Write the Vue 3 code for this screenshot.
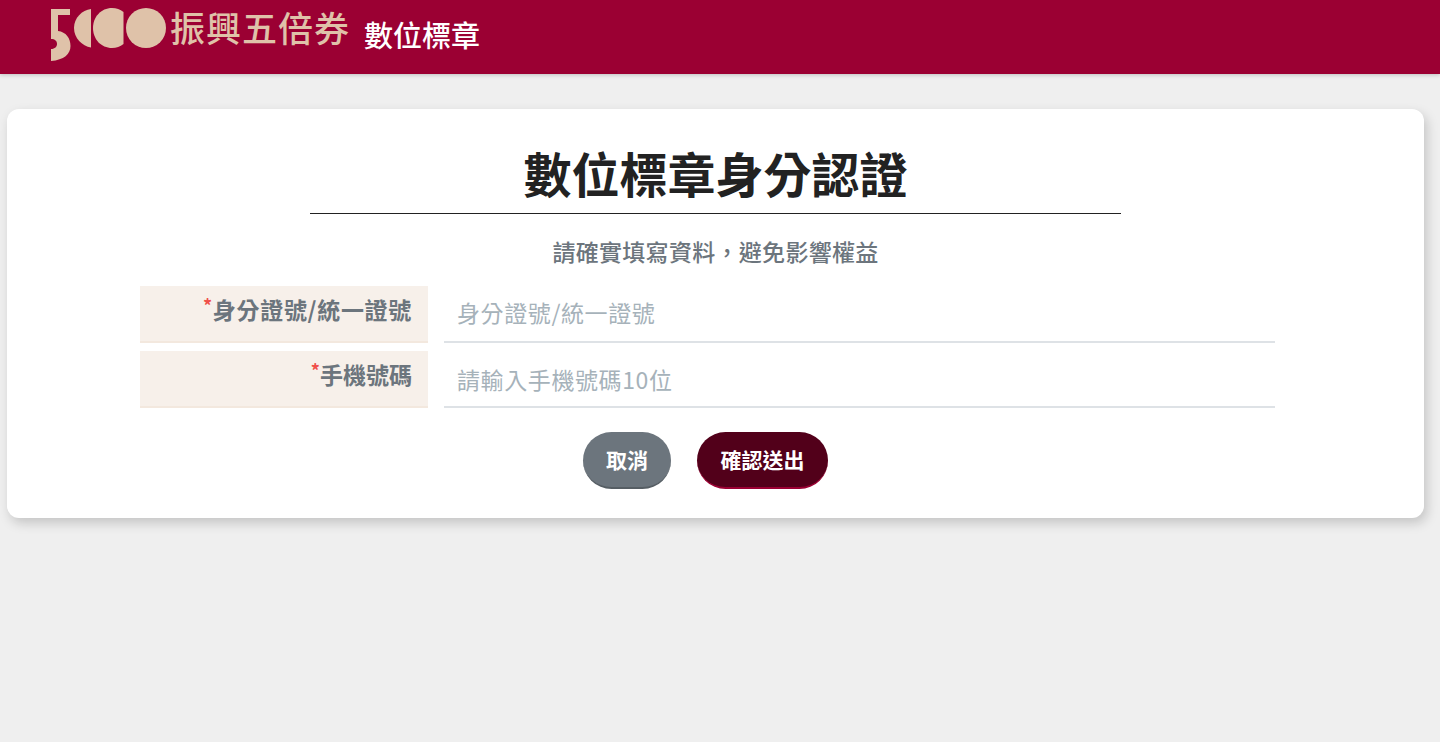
<template>
  <div class="page">
    <header class="top-bar">
      <div class="logo">
        <svg class="logo-mark" width="116" height="54" viewBox="0 0 116 54">
          <path d="M1 1H20V7H8V23C16 24 20.5 30 20.5 38C20.5 46 14 52 1 53V41C5 41 7 38.5 7 36C7 33 5 31 1 31Z" />
          <path d="M41 1V39.5C32 38 24 30 24 20C24 10 32 2 41 1Z" />
          <path d="M73.5 4V36C70 38.5 66.5 40 62 40C51 40 43 31 43 20C43 9 51 0 62 0C66.5 0 70 1.5 73.5 4Z" />
          <circle cx="96" cy="20" r="20" />
        </svg>
        <span class="logo-text">振興五倍券</span>
      </div>
      <span class="top-title">數位標章</span>
    </header>

    <main class="card">
      <h1 class="card-title">數位標章身分認證</h1>
      <p class="card-hint">請確實填寫資料，避免影響權益</p>

      <form class="form" @submit.prevent>
        <div v-for="field in fields" :key="field.label" class="form-row">
          <label class="form-label"><span class="required">*</span>{{ field.label }}</label>
          <div class="form-input">
            <input type="text" :placeholder="field.placeholder" />
          </div>
        </div>

        <div class="actions">
          <button type="button" class="btn btn-cancel">取消</button>
          <button type="submit" class="btn btn-submit">確認送出</button>
        </div>
      </form>
    </main>
  </div>
</template>

<script setup>
const fields = [
  { label: '身分證號/統一證號', placeholder: '身分證號/統一證號' },
  { label: '手機號碼', placeholder: '請輸入手機號碼10位' }
]
</script>

<style>
body {
  background: #efefef;
}
</style>

<style scoped>
.page {
  min-height: 742px;
  background: #efefef;
  font-family: "Noto Sans CJK TC", "Noto Sans", sans-serif;
  overflow: hidden;
}

.top-bar {
  height: 74px;
  background: #9b0033;
  display: flex;
  align-items: flex-start;
  padding-left: 50px;
  box-shadow: 0 1px 4px rgba(0, 0, 0, 0.2);
  box-sizing: border-box;
}

.logo {
  display: flex;
  align-items: flex-start;
  gap: 4px;
  padding-top: 8px;
}

.logo-mark {
  display: block;
  fill: #dfc2a9;
}

.logo-text {
  font-size: 35px;
  line-height: 42px;
  font-weight: 500;
  color: #dfc2a9;
  letter-spacing: 1px;
  margin-top: -2px;
}

.top-title {
  margin-left: 14px;
  margin-top: 14px;
  font-size: 29px;
  line-height: 40px;
  font-weight: 500;
  color: #fff;
}

.card {
  margin: 35px 16px 0 7px;
  height: 409px;
  box-sizing: border-box;
  background: #fff;
  border-radius: 12px;
  box-shadow: 3px 5px 12px rgba(0, 0, 0, 0.18);
  padding-top: 32px;
  display: flex;
  flex-direction: column;
  align-items: center;
}

.card-title {
  margin: 0;
  width: 811px;
  height: 73px;
  border-bottom: 1px solid #222;
  text-align: center;
  font-size: 48px;
  line-height: 62px;
  font-weight: 700;
  color: #222;
  box-sizing: border-box;
}

.card-hint {
  margin: 21px 0 0;
  font-size: 23px;
  line-height: 33px;
  font-weight: 500;
  letter-spacing: 0.3px;
  color: #6c757d;
}

.form {
  width: 1135px;
  margin: 18px 16px 0 0;
}

.form-row {
  display: flex;
  gap: 16px;
  height: 57px;
  margin-bottom: 8px;
}

.form-label {
  width: 288px;
  box-sizing: border-box;
  background: #f7f0ea;
  border-bottom: 2px solid #f3e8de;
  padding: 4px 16px 0 0;
  text-align: right;
  font-size: 23px;
  line-height: 38px;
  font-weight: 700;
  letter-spacing: 0.7px;
  color: #6c757d;
}

.form-row + .form-row .form-label {
  letter-spacing: 0;
}

.required {
  color: #f0504a;
  font-size: 18px;
  vertical-align: 6px;
  line-height: 1;
}

.form-input {
  flex: 1;
}

.form-input input {
  width: 100%;
  height: 57px;
  box-sizing: border-box;
  border: 0;
  border-bottom: 2px solid #dee2e6;
  padding: 0 13px 3px;
  font-family: inherit;
  font-size: 23px;
  letter-spacing: 0.6px;
  color: #495057;
  outline: none;
  background: transparent;
}

.form-row + .form-row input {
  padding-bottom: 0;
}

.form-input input::placeholder {
  color: #a6b2ba;
  opacity: 1;
}

.actions {
  display: flex;
  justify-content: center;
  gap: 26px;
  margin-top: 24px;
  padding-right: 4px;
}

.btn {
  height: 57px;
  border: 0;
  border-radius: 29px;
  font-family: inherit;
  font-size: 21px;
  font-weight: 700;
  color: #fff;
  padding: 0 0 2px;
  cursor: pointer;
}

.btn-cancel {
  width: 88px;
  background: #6c757d;
  border-bottom: 2px solid #565e64;
}

.btn-submit {
  width: 131px;
  background: #52001a;
  border-bottom: 2px solid #9b0033;
}
</style>
